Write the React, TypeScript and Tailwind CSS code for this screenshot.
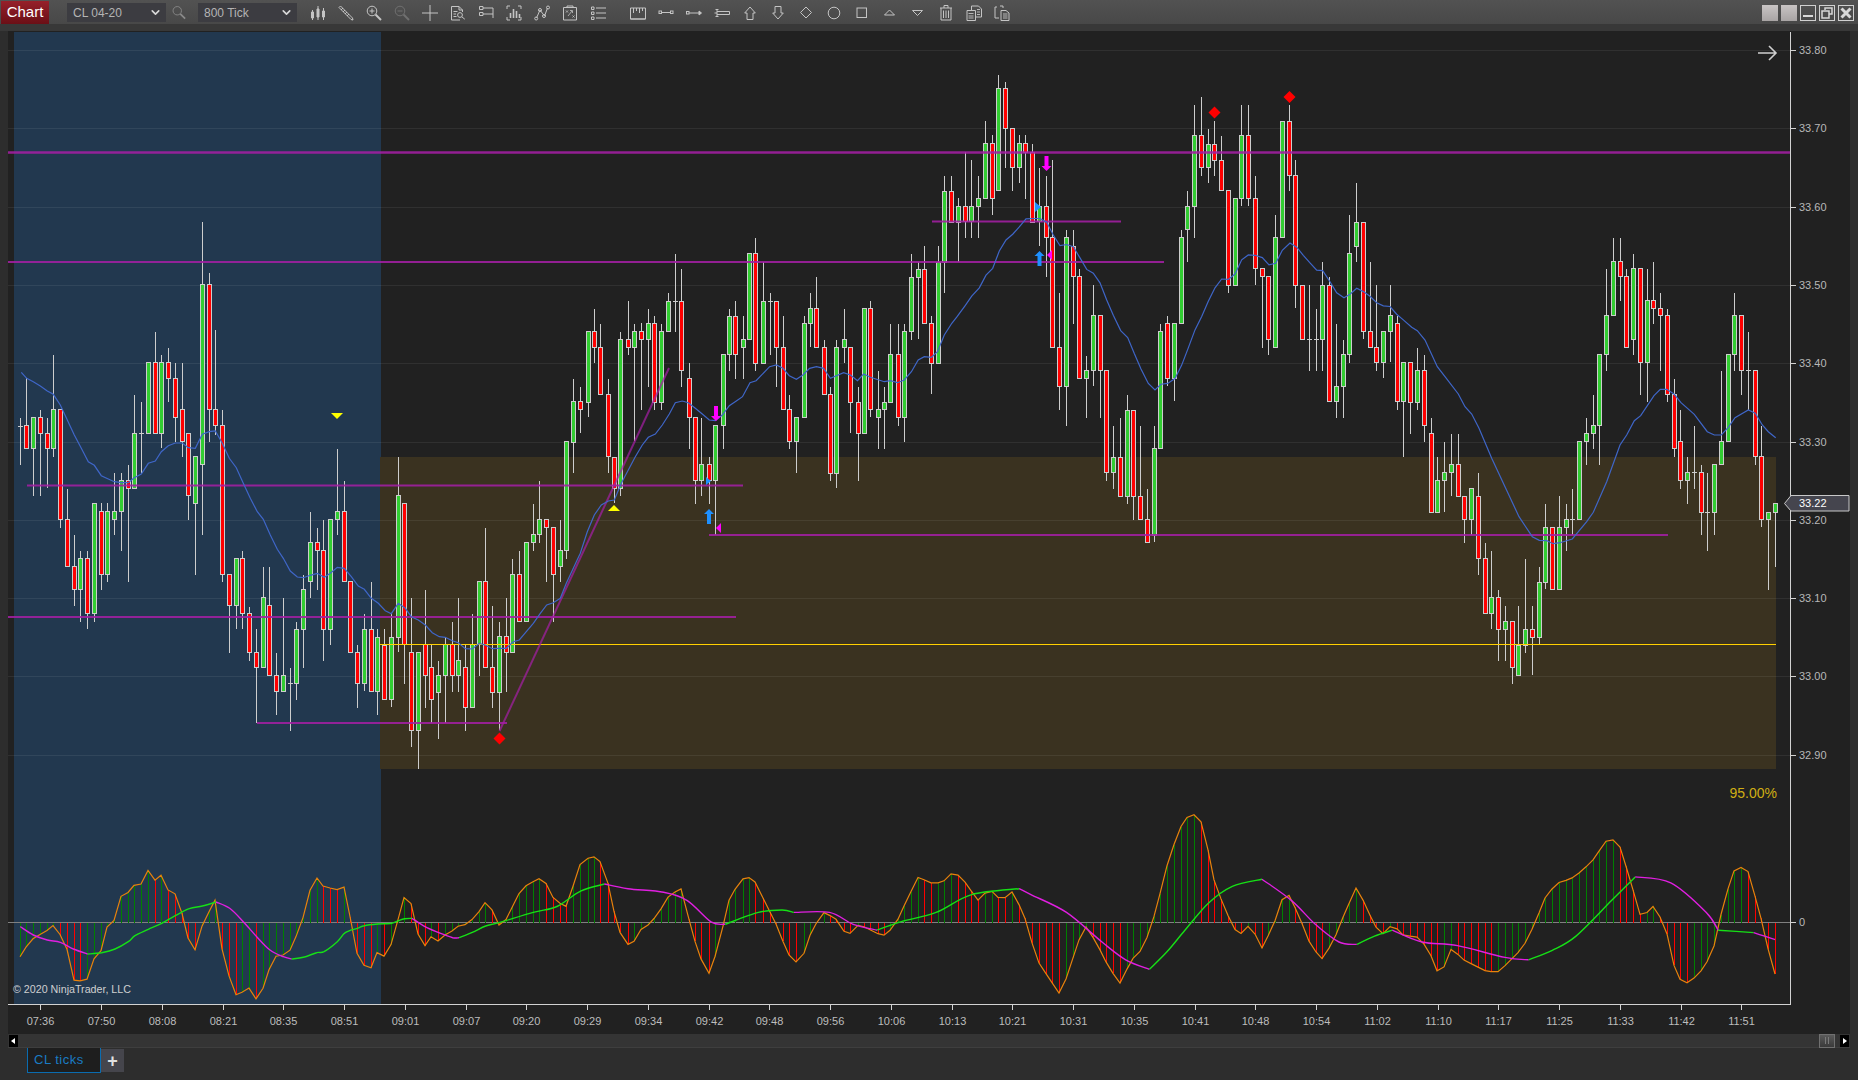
import { FC, ReactNode } from "react";
import { ChevronDown } from "lucide-react";

type Row = [number, number, number, number, number, number];
type Pt = [number, number];

// rows: x, high, body top, body bottom, low, kind (1 up, 0 down, 2 doji)
const seg = (ox: number, oy: number, sx: number, sy: number, rows: Row[]) =>
  rows.map(([x, hi, t, b, lo, k]) => ({
    x: Math.round(ox + x / sx),
    hi: oy + hi / sy,
    top: Math.round(oy + t / sy),
    bot: Math.round(oy + b / sy),
    lo: oy + lo / sy,
    k,
  }));

const conv = (ox: number, oy: number, sx: number, sy: number, pts: Pt[]): Pt[] =>
  pts.map(([x, y]) => [ox + x / sx, oy + y / sy]);

const candles = [
  ...seg(0, 340, 3, 3, [
    [61, 235, 257, 257, 375, 2], [79, 115, 256, 325, 325, 0], [100, 232, 232, 325, 467, 1], [121, 210, 232, 280, 467, 0],
    [142, 235, 280, 325, 445, 0], [160, 45, 208, 325, 350, 1], [181, 208, 208, 538, 563, 0], [202, 447, 538, 679, 679, 0],
    [223, 585, 679, 748, 797, 0], [241, 633, 655, 748, 845, 1], [262, 633, 655, 820, 866, 0], [283, 490, 490, 820, 845, 1],
    [304, 490, 514, 703, 750, 0], [322, 490, 514, 703, 725, 1], [343, 400, 514, 538, 585, 1], [364, 400, 421, 514, 632, 1],
    [385, 375, 421, 445, 725, 0], [403, 165, 280, 445, 445, 1], [424, 186, 280, 280, 400, 2], [445, 67, 67, 280, 280, 1],
    [466, -24, 67, 280, 280, 0], [484, 45, 67, 280, 325, 1], [505, 25, 67, 115, 185, 0], [526, 70, 115, 232, 305, 0],
    [547, 70, 208, 304, 350, 0], [565, 280, 280, 466, 540, 0], [586, 349, 349, 490, 705, 1], [607, -354, -168, 373, 585, 1],
    [628, -200, -168, 208, 305, 0], [646, -30, 208, 256, 285, 0], [667, 210, 256, 703, 725, 0], [688, 703, 703, 796, 938, 0],
    [709, 655, 655, 796, 866, 1], [727, 633, 655, 820, 866, 0], [748, 800, 820, 937, 962, 0], [769, 867, 937, 982, 1148, 0],
    [790, 680, 772, 982, 982, 1], [808, 680, 796, 1006, 1006, 0], [829, 938, 1006, 1054, 1125, 0], [850, 775, 1006, 1054, 1054, 1],
    [871, 985, 1030, 1030, 1172, 2], [889, 845, 866, 1030, 1080, 1], [910, 705, 748, 866, 985, 1], [931, 517, 607, 724, 773, 1],
    [952, 565, 607, 631, 750, 0], [970, 540, 631, 866, 962, 0], [991, 538, 538, 866, 914, 1], [1012, 327, 514, 538, 585, 1],
    [1033, 423, 514, 724, 724, 0], [1051, 724, 724, 937, 937, 0], [1072, 915, 937, 1030, 1104, 0], [1093, 822, 866, 1030, 1054, 1],
    [1114, 727, 866, 1054, 1054, 0], [1132, 866, 890, 1054, 1125, 1], [1153, 866, 914, 1078, 1078, 0], [1174, 822, 890, 1078, 1102, 1],
    [1195, 350, 466, 890, 937, 1],
  ]),
  ...seg(380, 400, 3, 3, [
    [73, 310, 310, 733, 852, 0], [94, 595, 757, 990, 1040, 0], [115, 757, 757, 990, 1108, 1], [136, 570, 733, 826, 923, 0],
    [154, 733, 802, 898, 968, 0], [175, 783, 826, 875, 1017, 1], [196, 712, 733, 826, 968, 1], [217, 667, 733, 826, 875, 0],
    [235, 595, 781, 826, 875, 1], [256, 733, 802, 922, 992, 0], [277, 643, 733, 922, 922, 1], [298, 544, 544, 733, 827, 1],
    [316, 385, 544, 802, 802, 0], [337, 618, 802, 875, 923, 0], [358, 667, 708, 875, 990, 1], [379, 595, 708, 757, 875, 0],
    [397, 477, 523, 757, 757, 1], [418, 453, 523, 664, 664, 0], [439, 427, 427, 664, 664, 1], [460, 312, 403, 427, 452, 1],
    [478, 243, 358, 403, 428, 1], [499, 358, 358, 382, 545, 0], [520, 382, 382, 523, 665, 0], [541, 360, 451, 499, 545, 1],
    [559, 124, 124, 451, 477, 1],
  ]),
  ...seg(400, 60, 2.8, 3, [
    [485, 958, 1023, 1145, 1238, 1], [505, 982, 1023, 1048, 1120, 0], [525, 814, 814, 1025, 1072, 1], [542, 748, 814, 862, 908, 0],
    [561, 792, 862, 1003, 1003, 0], [581, 958, 1003, 1188, 1238, 0], [600, 1190, 1190, 1285, 1330, 0], [617, 815, 838, 1285, 1308, 1],
    [637, 723, 838, 862, 885, 0], [656, 792, 814, 862, 1143, 1], [676, 790, 814, 838, 1050, 0], [693, 747, 790, 838, 980, 1],
    [712, 768, 790, 1025, 1050, 0], [732, 792, 814, 1025, 1050, 1], [751, 698, 722, 814, 814, 1], [769, 582, 722, 722, 815, 2],
    [788, 627, 722, 931, 980, 0], [808, 908, 955, 1072, 1167, 0], [827, 1072, 1072, 1261, 1332, 0], [844, 1075, 1213, 1261, 1308, 1],
    [864, 1190, 1213, 1261, 1332, 0], [883, 1096, 1096, 1261, 1425, 1], [903, 883, 883, 1096, 1167, 1], [920, 747, 767, 883, 932, 1],
    [939, 723, 767, 883, 957, 0], [959, 767, 838, 862, 957, 1], [978, 580, 580, 838, 838, 1], [995, 533, 580, 908, 932, 0],
    [1015, 605, 722, 908, 908, 1], [1035, 698, 722, 722, 885, 2], [1054, 722, 722, 862, 980, 0], [1071, 768, 862, 1048, 1048, 0],
    [1090, 1005, 1048, 1143, 1167, 0], [1110, 1072, 1072, 1143, 1238, 1], [1130, 768, 790, 1072, 1072, 1], [1147, 698, 745, 790, 862, 1],
    [1166, 651, 745, 862, 862, 0], [1186, 840, 862, 1003, 1003, 0], [1205, 982, 1003, 1238, 1262, 0], [1222, 840, 862, 1238, 1285, 1],
    [1242, 747, 838, 862, 908, 1], [1261, 862, 862, 1025, 1120, 0], [1281, 982, 1025, 1120, 1262, 0], [1298, 745, 745, 1120, 1120, 1],
    [1317, 723, 745, 1048, 1072, 0], [1337, 932, 1048, 1072, 1167, 1], [1356, 980, 1025, 1048, 1167, 1], [1373, 792, 883, 1025, 1025, 1],
    [1393, 792, 883, 1072, 1097, 0], [1412, 792, 814, 1072, 1145, 1], [1432, 582, 650, 814, 840, 1], [1449, 605, 626, 650, 838, 1],
    [1468, 558, 626, 790, 790, 0], [1488, 768, 790, 908, 1003, 0], [1507, 558, 605, 908, 908, 1], [1524, 348, 392, 605, 698, 1],
    [1544, 348, 392, 485, 485, 0], [1563, 415, 438, 485, 605, 1],
  ]),
  ...seg(950, 80, 3, 2.6133, [
    [46, 188, 330, 368, 412, 0], [64, 208, 330, 368, 412, 1], [85, 250, 309, 330, 412, 1], [106, 107, 165, 309, 309, 1],
    [127, 145, 165, 309, 352, 0], [145, -13, 22, 288, 288, 1], [166, 5, 22, 126, 230, 0], [187, 126, 126, 228, 290, 0],
    [208, 145, 165, 228, 268, 1], [226, 145, 165, 187, 310, 0], [247, 167, 187, 370, 370, 0], [268, 230, 330, 368, 433, 1],
    [289, 250, 330, 411, 515, 0], [307, 208, 411, 698, 698, 0], [328, 557, 698, 800, 862, 0], [349, 392, 411, 800, 903, 1],
    [370, 392, 433, 513, 638, 0], [388, 495, 513, 780, 780, 0], [409, 720, 758, 780, 882, 1], [430, 536, 615, 758, 800, 1],
    [451, 615, 615, 758, 882, 0], [469, 758, 758, 1025, 1047, 0], [490, 905, 985, 1025, 1068, 1], [511, 882, 985, 1086, 1086, 0],
    [532, 823, 862, 1086, 1107, 1], [550, 862, 862, 1086, 1149, 0], [571, 905, 1086, 1148, 1148, 0], [592, 1068, 1148, 1208, 1208, 0],
    [613, 905, 963, 1188, 1208, 1], [631, 638, 657, 963, 963, 1], [652, 617, 636, 780, 800, 0], [673, 636, 636, 780, 840, 1],
    [694, 392, 411, 636, 636, 1], [712, 290, 330, 390, 475, 1], [733, 66, 145, 330, 412, 1], [754, 45, 145, 228, 250, 0],
    [775, 128, 166, 228, 268, 1], [793, 107, 166, 208, 250, 0], [814, 147, 208, 288, 288, 0], [835, 288, 288, 535, 556, 0],
    [856, 309, 309, 535, 535, 1], [874, 66, 145, 309, 330, 1], [895, 66, 145, 309, 330, 0], [916, 250, 309, 492, 535, 0],
    [937, 492, 492, 513, 700, 0], [955, 513, 513, 678, 718, 0], [976, 353, 411, 698, 698, 1], [997, 106, 106, 411, 411, 1],
    [1018, 66, 106, 248, 290, 0], [1036, 208, 248, 535, 597, 0], [1057, 535, 535, 678, 678, 0], [1078, 536, 678, 678, 760, 2],
    [1099, 598, 678, 678, 760, 2], [1117, 476, 535, 678, 760, 1], [1138, 515, 535, 840, 840, 0], [1159, 638, 800, 840, 882, 1],
    [1180, 680, 717, 800, 882, 1], [1198, 353, 453, 717, 740, 1], [1219, 268, 370, 433, 476, 1], [1240, 370, 370, 657, 678, 0],
    [1261, 476, 657, 698, 698, 0], [1279, 536, 698, 738, 760, 0], [1300, 657, 657, 738, 780, 1], [1321, 536, 615, 657, 738, 1],
    [1342, 618, 636, 840, 862, 0], [1360, 738, 738, 840, 985, 1],
  ]),
  ...seg(1400, 220, 3, 3, [
    [31, 427, 427, 545, 642, 0], [52, 385, 451, 545, 570, 1], [73, 405, 451, 616, 665, 0], [94, 595, 640, 875, 875, 0],
    [112, 711, 781, 875, 875, 1], [133, 667, 757, 781, 875, 1], [154, 643, 733, 757, 827, 1], [175, 643, 733, 827, 827, 0],
    [193, 827, 827, 898, 968, 0], [214, 805, 805, 898, 945, 1], [235, 760, 827, 1015, 1064, 0], [256, 968, 1015, 1180, 1180, 0],
    [274, 992, 1132, 1180, 1227, 1], [295, 1110, 1132, 1226, 1322, 0], [316, 1158, 1204, 1226, 1322, 1], [337, 1204, 1204, 1342, 1392, 0],
    [355, 1158, 1274, 1366, 1366, 1], [376, 1018, 1226, 1274, 1298, 1], [397, 1158, 1226, 1250, 1366, 0], [418, 1040, 1085, 1250, 1274, 1],
    [436, 852, 922, 1085, 1108, 1], [457, 922, 922, 1108, 1108, 0], [478, 828, 922, 1108, 1108, 1], [499, 852, 898, 922, 992, 1],
    [517, 808, 898, 898, 945, 2], [538, 664, 664, 898, 898, 1], [559, 595, 640, 664, 735, 1], [580, 525, 616, 640, 687, 1],
    [598, 403, 403, 616, 735, 1], [619, 148, 286, 403, 453, 1], [640, 55, 124, 286, 286, 1], [661, 55, 124, 169, 242, 0],
    [679, 148, 169, 382, 382, 0], [700, 102, 145, 358, 405, 1], [721, 145, 145, 427, 525, 0], [742, 148, 241, 427, 545, 1],
    [760, 126, 241, 265, 312, 0], [781, 220, 265, 286, 453, 0], [802, 268, 286, 523, 545, 0], [823, 477, 523, 685, 711, 0],
    [841, 570, 664, 781, 807, 0], [862, 711, 757, 781, 852, 1], [883, 618, 757, 757, 807, 2], [904, 735, 757, 875, 945, 0],
    [922, 760, 875, 875, 992, 2], [943, 733, 733, 875, 945, 1], [964, 453, 664, 733, 733, 1], [985, 403, 403, 664, 664, 1],
    [1003, 220, 286, 403, 453, 1], [1024, 286, 286, 451, 525, 0], [1045, 336, 451, 451, 570, 2], [1066, 451, 451, 709, 735, 0],
    [1084, 618, 709, 898, 922, 0], [1105, 875, 875, 898, 1110, 1], [1126, 850, 850, 875, 1040, 1],
  ]),
];

const maLine: Pt[] = [
  ...conv(0, 340, 3, 3, [
    [64, 97], [80, 115], [100, 125], [121, 138], [142, 153], [160, 163], [181, 195], [202, 240], [223, 285], [244, 325], [265, 365], [283, 376],
    [304, 407], [325, 417], [343, 425], [364, 428], [385, 428], [403, 413], [424, 402], [445, 370], [466, 363], [484, 335], [505, 317], [526, 309],
    [547, 309], [565, 323], [586, 325], [607, 283], [628, 275], [646, 273], [667, 310], [688, 355], [709, 383], [730, 430], [751, 475], [772, 515],
    [790, 538], [811, 585], [832, 628], [850, 655], [871, 693], [892, 711], [910, 713], [931, 706], [952, 700], [973, 712], [991, 700], [1012, 682],
    [1033, 685], [1054, 710], [1075, 738], [1093, 748], [1114, 775], [1135, 790], [1156, 812], [1174, 821], [1195, 790],
  ]),
  ...conv(380, 400, 3, 3, [
    [55, 610], [76, 625], [94, 650], [115, 660], [136, 675], [157, 698], [178, 710], [196, 712], [217, 722], [235, 728], [256, 746], [277, 747],
    [298, 730], [316, 735], [337, 746], [358, 745], [379, 745], [400, 725], [418, 720], [439, 695], [460, 670], [481, 640], [500, 615], [520, 608],
    [541, 595], [559, 550], [580, 505], [601, 460], [622, 395], [643, 345], [664, 315], [685, 303], [703, 300], [724, 250], [745, 210], [766, 170],
    [787, 135], [805, 112], [826, 102], [847, 75], [868, 42], [886, 8], [907, 3], [925, 8], [946, 25], [967, 42], [988, 60], [1006, 62], [1027, 45],
    [1048, 17], [1069, 3],
  ]),
  ...conv(400, 60, 2.8, 3, [
    [959, 1010], [980, 968], [997, 962], [1035, 920], [1054, 915], [1072, 925], [1090, 947], [1110, 958], [1128, 945], [1147, 925], [1166, 920],
    [1186, 925], [1205, 955], [1242, 938], [1261, 945], [1281, 962], [1298, 942], [1317, 952], [1356, 965], [1373, 962], [1393, 968], [1412, 960],
    [1432, 935], [1451, 900], [1468, 890], [1488, 892], [1505, 875], [1524, 825], [1545, 790],
  ]),
  ...conv(950, 80, 3, 2.6133, [
    [20, 620], [45, 590], [65, 565], [88, 543], [108, 510], [128, 492], [148, 447], [168, 418], [188, 403], [208, 384], [228, 363], [250, 362], [270, 362],
    [290, 372], [310, 405], [330, 433], [350, 430], [370, 436], [390, 465], [410, 495], [430, 505], [450, 530], [470, 575], [490, 615], [512, 655],
    [533, 673], [553, 715], [573, 755], [595, 793], [615, 810], [633, 795], [653, 793], [675, 780], [695, 745], [715, 700], [735, 653], [755, 618],
    [775, 578], [795, 543], [815, 520], [835, 521], [855, 507], [875, 470], [895, 457], [915, 458], [937, 464], [957, 483], [977, 479], [997, 445],
    [1020, 426], [1040, 437], [1060, 458], [1080, 478], [1100, 497], [1118, 498], [1140, 527], [1160, 556], [1182, 569], [1200, 560], [1220, 544],
    [1240, 553], [1260, 565], [1280, 582], [1300, 590], [1320, 592], [1340, 612], [1360, 627],
  ]),
  ...conv(1400, 220, 3, 3, [
    [35, 322], [52, 332], [75, 360], [112, 440], [135, 470], [175, 522], [195, 560], [215, 582], [237, 625], [275, 715], [315, 800], [357, 890],
    [397, 950], [418, 961], [440, 962], [460, 971], [480, 968], [517, 957], [560, 905], [580, 877], [620, 785], [660, 675], [680, 645], [703, 602],
    [722, 587], [762, 527], [781, 508], [800, 508], [822, 522], [843, 548], [883, 583], [922, 635], [943, 645], [964, 645], [985, 622], [1005, 593],
    [1045, 570], [1066, 580], [1087, 615], [1105, 635], [1127, 653],
  ]),
];

// shrunk reference coordinates for the rest of the oscillator
const K = 1568 / 1858;

const oscKeys: Pt[] = [
  ...conv(0, 800, 3, 3, [
    [61, 470], [82, 435], [103, 412], [122, 402], [142, 391], [161, 375], [181, 405], [202, 450], [223, 545], [243, 542], [263, 537], [284, 470],
    [305, 450], [324, 368], [345, 360], [364, 285], [385, 277], [405, 252], [425, 252], [446, 207], [466, 242], [485, 224], [505, 272], [526, 282],
    [546, 340], [565, 418], [586, 451], [607, 375], [627, 335], [648, 295], [667, 455], [689, 535], [709, 587], [729, 575], [749, 563], [770, 600],
    [790, 563], [810, 500], [830, 465], [850, 465], [871, 450], [890, 405], [910, 350], [932, 263], [953, 231], [972, 263], [992, 264], [1012, 269],
    [1033, 261], [1052, 360], [1072, 465], [1093, 497], [1115, 504], [1133, 452], [1154, 470], [1175, 430], [1195, 355], [1214, 285], [1236, 315],
    [1257, 417], [1278, 440], [1296, 404], [1316, 425], [1337, 403], [1358, 392], [1377, 376], [1397, 374], [1417, 358], [1437, 335], [1457, 305],
    [1477, 331], [1497, 375],
  ]),
  ...conv(0, 0, K, K, [
    [425, 780], [440, 750], [448, 745], [458, 740], [468, 760], [478, 765], [490, 728], [500, 722], [510, 730], [516, 760], [522, 785], [532, 800],
    [540, 785], [548, 780], [556, 770], [565, 755], [575, 750], [585, 790], [597, 825], [606, 800], [615, 760], [625, 742], [635, 740], [645, 760],
    [655, 780], [665, 805], [675, 815], [685, 785], [695, 770], [705, 775], [715, 790], [725, 780], [735, 785], [745, 790], [755, 782], [765, 760],
    [775, 740], [785, 745], [795, 745], [805, 735], [815, 745], [825, 760], [835, 750], [845, 760], [855, 752], [865, 775], [875, 810], [885, 825],
    [895, 840], [905, 810], [915, 780], [925, 795], [935, 815], [945, 830], [955, 810], [965, 800], [975, 770], [985, 730], [995, 700], [1005, 685],
    [1015, 695], [1025, 745], [1035, 770], [1045, 790], [1055, 780], [1065, 800], [1075, 780], [1085, 750], [1095, 770], [1105, 795], [1115, 810],
    [1125, 795], [1135, 770], [1145, 748], [1155, 770], [1165, 790], [1175, 780], [1185, 790], [1195, 790], [1205, 800], [1215, 825], [1225, 800],
    [1235, 810], [1245, 815], [1255, 820], [1265, 820], [1275, 810], [1285, 800], [1295, 780], [1305, 755], [1315, 745], [1325, 742], [1335, 735],
    [1345, 725], [1355, 710], [1365, 708], [1375, 740], [1385, 775], [1395, 765], [1405, 780], [1415, 825], [1425, 830], [1435, 820], [1445, 805],
    [1455, 760], [1465, 730], [1475, 735], [1485, 770], [1497, 822],
  ]),
];

const interp = (keys: Pt[], x: number) => {
  if (x <= keys[0][0]) return keys[0][1];
  for (let i = 1; i < keys.length; i++) {
    if (x <= keys[i][0]) {
      const [x0, y0] = keys[i - 1];
      const [x1, y1] = keys[i];
      return y0 + ((y1 - y0) * (x - x0)) / (x1 - x0);
    }
  }
  return keys[keys.length - 1][1];
};

const oscPts: Pt[] = candles.map((c) => [c.x, interp(oscKeys, c.x)]);

const MAG = "#e01fe0";
const GRN = "#16e016";
const z9 = (pts: Pt[]) => conv(0, 800, 3, 3, pts);
const s = (pts: Pt[]) => conv(0, 0, K, K, pts);

// the signal line is split where it changes colour
const signal: { c: string; pts: Pt[] }[] = [
  { c: MAG, pts: z9([[61, 380], [100, 405], [142, 420], [181, 427], [220, 447], [263, 462]]) },
  { c: GRN, pts: z9([[263, 462], [305, 458], [345, 447], [385, 425], [405, 407], [445, 388], [485, 370], [526, 347], [568, 326], [607, 318], [648, 306]]) },
  { c: MAG, pts: z9([[648, 306], [689, 325], [730, 365], [770, 410], [810, 450], [850, 470], [875, 477]]) },
  { c: GRN, pts: z9([[875, 477], [910, 472], [950, 458], [972, 455], [1012, 425], [1036, 398], [1072, 385], [1093, 377], [1133, 372], [1175, 370], [1195, 362], [1214, 356], [1236, 355]]) },
  { c: MAG, pts: z9([[1236, 355], [1275, 380], [1316, 398], [1358, 413], [1377, 413]]) },
  { c: GRN, pts: [...z9([[1377, 413], [1417, 397], [1457, 378], [1497, 368]]), ...s([[450, 770], [470, 765], [490, 752], [510, 746]])] },
  { c: MAG, pts: s([[510, 746], [530, 750], [560, 753], [580, 760], [600, 778], [612, 780]]) },
  { c: GRN, pts: s([[612, 780], [640, 770], [660, 768], [670, 770]]) },
  { c: MAG, pts: s([[670, 770], [700, 770], [720, 780], [740, 785]]) },
  { c: GRN, pts: s([[740, 785], [760, 778], [790, 770], [820, 755], [860, 750]]) },
  { c: MAG, pts: s([[860, 750], [870, 755], [900, 770], [930, 795], [950, 810], [970, 818]]) },
  { c: GRN, pts: s([[970, 818], [985, 803], [1000, 785], [1020, 762], [1040, 748], [1065, 742]]) },
  { c: MAG, pts: s([[1065, 742], [1090, 760], [1110, 780], [1130, 795], [1145, 797]]) },
  { c: GRN, pts: s([[1145, 797], [1160, 790], [1175, 785]]) },
  { c: MAG, pts: s([[1175, 785], [1200, 795], [1230, 798], [1270, 808], [1290, 810]]) },
  { c: GRN, pts: s([[1290, 810], [1310, 802], [1330, 790], [1360, 760], [1380, 740]]) },
  { c: MAG, pts: s([[1380, 740], [1410, 745], [1440, 770], [1450, 785]]) },
  { c: GRN, pts: s([[1450, 785], [1480, 787]]) },
  { c: MAG, pts: s([[1480, 787], [1498, 793]]) },
];

// catmull-rom through the traced points
const smooth = (pts: Pt[]) => {
  let d = `M${pts[0][0].toFixed(1)} ${pts[0][1].toFixed(1)}`;
  for (let i = 0; i < pts.length - 1; i++) {
    const p0 = pts[i - 1] ?? pts[i];
    const p1 = pts[i];
    const p2 = pts[i + 1];
    const p3 = pts[i + 2] ?? p2;
    const c1x = p1[0] + (p2[0] - p0[0]) / 6;
    const c1y = p1[1] + (p2[1] - p0[1]) / 6;
    const c2x = p2[0] - (p3[0] - p1[0]) / 6;
    const c2y = p2[1] - (p3[1] - p1[1]) / 6;
    d += `C${c1x.toFixed(1)} ${c1y.toFixed(1)} ${c2x.toFixed(1)} ${c2y.toFixed(1)} ${p2[0].toFixed(1)} ${p2[1].toFixed(1)}`;
  }
  return d;
};

const prices = ["33.80", "33.70", "33.60", "33.50", "33.40", "33.30", "33.20", "33.10", "33.00", "32.90"];
const times = [
  "07:36", "07:50", "08:08", "08:21", "08:35", "08:51", "09:01", "09:07", "09:20", "09:29", "09:34", "09:42", "09:48", "09:56", "10:06",
  "10:13", "10:21", "10:31", "10:35", "10:41", "10:48", "10:54", "11:02", "11:10", "11:17", "11:25", "11:33", "11:42", "11:51",
];

const purple: [number, number, number, number][] = [
  [8, 1790, 152.5, 2.5],
  [8, 1164, 262, 2],
  [932, 1121, 221.5, 2],
  [27, 743, 485.5, 2],
  [8, 736, 617, 2],
  [257, 507, 723, 2],
  [709, 1668, 535, 2],
];

const ptStr = (pts: Pt[]) => pts.map(([x, y]) => `${x.toFixed(1)},${y.toFixed(1)}`).join(" ");
const gridY = (i: number) => Math.round(50 + i * 78.3) + 0.5;
const ZERO = 922.5;

const Chart: FC = () => (
  <svg width={1842} height={1003} viewBox="8 31 1842 1003" className="block">
    <rect x={8} y={31} width={1842} height={1003} fill="#212121" />
    <rect x={14} y={32} width={367} height={972} fill="#22384f" />
    <rect x={380} y={457} width={1396} height={312} fill="#3a3220" />

    {prices.map((_, i) => (
      <line key={i} x1={8} x2={1790} y1={gridY(i)} y2={gridY(i)} stroke="#ffffff" strokeOpacity={0.07} />
    ))}

    {candles.map((c, i) => (
      <g key={i} shapeRendering="crispEdges">
        <line x1={c.x + 0.5} x2={c.x + 0.5} y1={c.hi} y2={c.lo} stroke="#cdcdcd" />
        {c.k === 2 ? (
          <line x1={c.x - 2} x2={c.x + 3} y1={c.top + 0.5} y2={c.top + 0.5} stroke="#cdcdcd" />
        ) : (
          <rect x={c.x - 1.5} y={c.top + 0.5} width={4} height={Math.max(c.bot - c.top, 1)} fill={c.k === 1 ? "#32cd32" : "#ff0000"} stroke="#cdcdcd" />
        )}
      </g>
    ))}

    <line x1={380} x2={1776} y1={644.5} y2={644.5} stroke="#ffd000" />
    {purple.map(([x1, x2, y, w], i) => (
      <line key={i} x1={x1} x2={x2} y1={y} y2={y} stroke="#a31fa3" strokeOpacity={0.88} strokeWidth={w} />
    ))}
    <line x1={499.5} y1={731} x2={669} y2={368} stroke="#a31fa3" strokeOpacity={0.72} strokeWidth={2} />
    <polyline points={ptStr(maLine)} fill="none" stroke="#3f66c8" strokeWidth={1.2} />

    {/* markers */}
    <polygon points="331,413 343,413 337,419" fill="#ffff00" />
    <polygon points="608,511 620,511 614,505" fill="#ffff00" />
    {[[499.5, 738.5], [1214.5, 112.5], [1289.5, 97]].map(([x, y], i) => (
      <polygon key={i} points={`${x - 6},${y} ${x},${y - 6} ${x + 6},${y} ${x},${y + 6}`} fill="#ff0000" />
    ))}
    {[[716, 406], [1046.5, 156]].map(([x, y], i) => (
      <polygon key={i} points={`${x - 2},${y} ${x + 2},${y} ${x + 2},${y + 10} ${x + 5},${y + 10} ${x},${y + 15} ${x - 5},${y + 10} ${x - 2},${y + 10}`} fill="#ff00ff" />
    ))}
    {[[709, 509], [1039.5, 251]].map(([x, y], i) => (
      <polygon key={i} points={`${x - 2},${y + 15} ${x + 2},${y + 15} ${x + 2},${y + 5} ${x + 5},${y + 5} ${x},${y} ${x - 5},${y + 5} ${x - 2},${y + 5}`} fill="#1e90ff" />
    ))}
    <polygon points="706,477 711,481 706,485" fill="#1e90ff" />
    <polygon points="1035,202 1041,207 1035,212" fill="#1e90ff" />
    <polygon points="721,523 716,528 721,533" fill="#ff00ff" />
    <polygon points="1052,250 1047,255 1052,260" fill="#ff00ff" />
    <path d="M1758 53h17M1769 46l7 7-7 7" fill="none" stroke="#cfcfcf" strokeWidth={1.6} />

    {/* oscillator */}
    <line x1={8} x2={1790} y1={ZERO} y2={ZERO} stroke="#808080" />
    {oscPts.map(([x, y], i) => (
      <line
        key={i}
        x1={x + 0.5}
        x2={x + 0.5}
        y1={ZERO}
        y2={y}
        shapeRendering="crispEdges"
        stroke={i > 0 && y > oscPts[i - 1][1] ? "#ff0000" : "#008000"}
      />
    ))}
    <polyline points={ptStr(oscPts)} fill="none" stroke="#e8820c" strokeWidth={1.2} />
    {signal.map((l, i) => (
      <path key={i} d={smooth(l.pts)} fill="none" stroke={l.c} strokeWidth={1.4} />
    ))}

    <text x={13} y={990} dominantBaseline="middle" className="fill-[#cfcfcf] text-[10.7px]">
      © 2020 NinjaTrader, LLC
    </text>
    <text x={1777} y={794} textAnchor="end" dominantBaseline="middle" className="fill-[#d0ae14] text-[14px]">
      95.00%
    </text>

    {/* axes */}
    <path d="M8 1004.5H1790.5V32" fill="none" stroke="#d2d2d2" shapeRendering="crispEdges" />
    {prices.map((p, i) => (
      <g key={p}>
        <line x1={1790} x2={1796} y1={gridY(i)} y2={gridY(i)} stroke="#d2d2d2" shapeRendering="crispEdges" />
        <text x={1799} y={gridY(i) + 0.5} dominantBaseline="middle" className="fill-[#b8b8b8] text-[11px]">
          {p}
        </text>
      </g>
    ))}
    <line x1={1790} x2={1796} y1={ZERO} y2={ZERO} stroke="#d2d2d2" shapeRendering="crispEdges" />
    <text x={1799} y={ZERO + 0.5} dominantBaseline="middle" className="fill-[#b8b8b8] text-[11px]">
      0
    </text>
    <polygon points="1784.5,503.500 1791,495.500 1849,495.500 1849,511 1791,511" fill="#45454e" stroke="#c8c8c8" />
    <text x={1799} y={504} dominantBaseline="middle" className="fill-white text-[11px]">
      33.22
    </text>
    {times.map((t, i) => {
      const x = Math.round(40.3 + i * 60.75) + 0.5;
      return (
        <g key={t}>
          <line x1={x} x2={x} y1={1005} y2={1010} stroke="#d2d2d2" shapeRendering="crispEdges" />
          <text x={x} y={1022.5} textAnchor="middle" dominantBaseline="middle" className="fill-[#bdbdbd] text-[11px]">
            {t}
          </text>
        </g>
      );
    })}
  </svg>
);

const Ic: FC<{ children: ReactNode; dim?: boolean }> = ({ children, dim }) => (
  <svg
    width={16}
    height={16}
    viewBox="0 0 16 16"
    fill="none"
    stroke="currentColor"
    className={dim ? "shrink-0 text-[#707070]" : "shrink-0 text-[#c4c4c4]"}
  >
    {children}
  </svg>
);

const Magnifier: FC<{ plus?: boolean; minus?: boolean }> = ({ plus, minus }) => (
  <>
    <circle cx={6} cy={6} r={4.8} />
    <path d="M9.5 9.5l5.5 5.5" strokeWidth={2} />
    {(plus || minus) && <path d="M3.5 6h5" />}
    {plus && <path d="M6 3.5v5" />}
  </>
);

const toolA: ReactNode[] = [
  <Ic key="candles">
    <path d="M2.5 5v10M8 1v14M13.5 3v12" />
    <path d="M1.5 7h2v6h-2zM7 4h2v8H7zM12.5 6h2v6h-2z" fill="currentColor" />
  </Ic>,
  <Ic key="pencil">
    <path d="M1 2.5L2.5 1l12 12 .5 2-2-.5z" />
    <path d="M3 5l2-2M5 7l2-2M7 9l2-2M9 11l2-2" />
  </Ic>,
  <Ic key="zin"><Magnifier plus /></Ic>,
  <Ic key="zout" dim><Magnifier minus /></Ic>,
  <Ic key="cross"><path d="M0 8h16M8 0v16" /></Ic>,
  <Ic key="docsearch">
    <path d="M10 15H1.5V1.5H9L12.5 5v2M9 1.5V5h3.5" />
    <path d="M3.5 6.5h4M3.5 9h2.5M3.5 11.5h3" />
    <circle cx={10} cy={10} r={2.4} />
    <path d="M11.8 11.8l3 2.4" />
  </Ic>,
  <Ic key="props">
    <path d="M1.5 1.5h3.5v3H1.5zM1.5 7.5h3.5v3H1.5z" />
    <path d="M5 3h10M5 9h10M15 3v10" />
  </Ic>,
  <Ic key="template">
    <path d="M4 1H1v3M12 1h3v3M1 12v3h3M15 12v3h-3" />
    <path d="M4.5 13V8M7.5 13V4M10.5 13V6M13.5 13V9" strokeWidth={1.6} />
  </Ic>,
  <Ic key="nodes">
    <path d="M2.5 13L6 5l4.5 6 3-8" />
    <circle cx={2.2} cy={13.5} r={1.5} />
    <circle cx={6} cy={5} r={1.5} />
    <circle cx={10} cy={11} r={1.5} />
    <circle cx={14} cy={2.5} r={1.5} />
  </Ic>,
  <Ic key="clipboard">
    <path d="M1.5 2.5h13v12.5h-13zM5 2.5V1h6v1.5" />
    <path d="M6 11l4-5M8 5.5h2.5V8M4 5.5l2 2M6 5.5l-2 2M10.5 10.5l2 2M12.5 10.5l-2 2" strokeWidth={0.8} />
  </Ic>,
  <Ic key="list">
    <path d="M1.5 2h2.5v2.5H1.5zM1.5 7h2.5v2.5H1.5zM1.5 12h2.5v2.5H1.5z" />
    <path d="M6 3h10M6 8h10M6 13h10" />
  </Ic>,
];

const toolB: ReactNode[] = [
  <Ic key="ruler"><path d="M.5 3h15v11H.5zM.5 14h15M3.5 3v5M6.5 3v3M9.5 3v5M12.5 3v3" /></Ic>,
  <Ic key="line"><path d="M3 7.5h9" /><rect x={1} y={6} width={2.5} height={2.5} /><rect x={12.5} y={6} width={2.5} height={2.5} /></Ic>,
  <Ic key="arrow"><path d="M3 8h12" /><rect x={0.5} y={6.5} width={2.5} height={2.5} /><path d="M13 6l2.5 2-2.5 2z" fill="currentColor" /></Ic>,
  <Ic key="ext"><path d="M.5 8H3M1.500 4.500h3M1.500 11.500h3M3 4.500v7M3 6.500h12.500v3H3" /></Ic>,
  <Ic key="up"><path d="M8 2L2.700 8H5v6.500h6V8h2.300z" /></Ic>,
  <Ic key="down"><path d="M8 14l5.300-6H11V1.500H5V8H2.700z" /></Ic>,
  <Ic key="diamond"><path d="M8 2l5.500 5.500L8 13 2.500 7.500z" /></Ic>,
  <Ic key="circle"><circle cx={8} cy={8} r={5.8} /></Ic>,
  <Ic key="square"><rect x={3} y={3} width={9.5} height={9.5} /></Ic>,
  <Ic key="triup"><path d="M7.500 5L12.500 10h-10z" /></Ic>,
  <Ic key="tridown"><path d="M7.500 10.500L2.500 5.500h10z" /></Ic>,
  <Ic key="trash">
    <path d="M2 3h12M6 3V.5h4V3M3 3v12h10V3M5.500 5.500V13M8 5.500V13M10.500 5.500V13" />
  </Ic>,
  <Ic key="copy">
    <path d="M1 5.500h8.500v10H1zM5.500 5.500V1h7l3 3v8h-6" />
    <path d="M2.500 8.500h5M2.500 11h5M2.500 13h5M11 4.500h3M11 7h3M11 9.500h3" strokeWidth={0.9} />
  </Ic>,
  <Ic key="paste">
    <path d="M5 13H1V2h2M6 1h3v2M7 5.500h5l3 2.500v7.500H7z" />
    <path d="M9 9h4.500M9 11h4.500M9 13h4.500" strokeWidth={0.9} />
  </Ic>,
];

const Dropdown: FC<{ label: string }> = ({ label }) => (
  <div className="w-[99px] h-[19px] mt-[1px] bg-[#3c3c41] flex items-center justify-between pl-[6px] pr-[4px] text-[12px] text-[#b4b4b4]">
    <span>{label}</span>
    <ChevronDown size={13} strokeWidth={3} className="text-[#d8d8d8]" />
  </div>
);

const WinBtn: FC<{ children?: ReactNode; solid?: boolean }> = ({ children, solid }) =>
  solid ? (
    <div className="w-[16px] h-[16px] bg-gradient-to-b from-[#c8c4c4] to-[#a8a4a4]" />
  ) : (
    <div className="w-[16px] h-[16px] border border-[#d0d0d0] flex items-center justify-center">{children}</div>
  );

const Toolbar: FC = () => (
  <div className="h-[24px] bg-gradient-to-b from-[#525252] to-[#484848] flex items-center pl-[1px] pr-[4px]">
    <div className="w-[48px] h-[23px] bg-gradient-to-b from-[#96202a] to-[#6b0f16] text-white text-[15px] flex items-center justify-center">
      Chart
    </div>
    <div className="ml-[18px]">
      <Dropdown label="CL 04-20" />
    </div>
    <div className="ml-[6px] mt-[1px] text-[#8a8a8a] w-[14px] flex">
      <svg width={15} height={15} viewBox="0 0 16 16" fill="none" stroke="currentColor">
        <Magnifier />
      </svg>
    </div>
    <div className="ml-[12px]">
      <Dropdown label="800 Tick" />
    </div>
    <div className="ml-[13px] mt-[2px] flex items-center gap-[12px]">{toolA}</div>
    <div className="ml-[24px] mt-[2px] flex items-center gap-[12px]">{toolB}</div>
    <div className="ml-auto mt-[2px] flex items-center gap-[3px]">
      <WinBtn solid />
      <WinBtn solid />
      <WinBtn>
        <div className="w-[10px] h-[2px] bg-[#d8d8d8] mt-[6px]" />
      </WinBtn>
      <WinBtn>
        <svg width={12} height={12} viewBox="0 0 12 12" fill="none" stroke="#d8d8d8" strokeWidth={1.5}>
          <path d="M4 3V1h7v6H8M1 4h7v7H1z" />
        </svg>
      </WinBtn>
      <WinBtn>
        <svg width={12} height={12} viewBox="0 0 12 12" fill="none" stroke="#d8d8d8" strokeWidth={3}>
          <path d="M1.500 1.500l9 9M10.500 1.500l-9 9" />
        </svg>
      </WinBtn>
    </div>
  </div>
);

const ScrollBar: FC = () => (
  <div className="h-[14px] bg-[#343434] flex items-center pl-[1px] pr-[1px] border-b border-[#3e3e3e]">
    <div className="w-[9px] h-[12px] bg-black flex items-center justify-center text-white">
      <svg width={5} height={6} viewBox="0 0 5 6"><path d="M4 0v6L0 3z" fill="#fff" /></svg>
    </div>
    <div className="ml-auto w-[16px] h-[14px] border border-[#707070] bg-gradient-to-b from-[#5a5a5a] to-[#3a3a3a] flex items-center justify-center gap-[2px]">
      <div className="w-px h-[7px] bg-[#7a7a7a]" />
      <div className="w-px h-[7px] bg-[#7a7a7a]" />
    </div>
    <div className="ml-[5px] w-[9px] h-[12px] bg-black flex items-center justify-center">
      <svg width={5} height={6} viewBox="0 0 5 6"><path d="M1 0v6l4-3z" fill="#fff" /></svg>
    </div>
  </div>
);

const App: FC = () => (
  <div className="w-[1858px] h-[1080px] overflow-hidden bg-[#2d2d2d] font-['Liberation_Sans',Arial,sans-serif] flex flex-col">
    <Toolbar />
    <div className="h-[7px] bg-[#383838]" />
    <div className="mx-[8px] w-[1842px] flex flex-col">
      <Chart />
      <ScrollBar />
    </div>
    <div className="pl-[27px] flex items-start">
      <div className="w-[74px] h-[25px] bg-[#1e1e1e] border-x border-b border-[#0a6cb0] flex items-center pl-[6px] text-[13px] tracking-[0.5px] text-[#1a7cc4]">
        CL ticks
      </div>
      <div className="w-[23px] h-[23px] mt-[1px] bg-[#45454c] flex items-center justify-center text-[#e0e0e0] text-[18px] font-bold leading-none">
        +
      </div>
    </div>
  </div>
);

export default App;
